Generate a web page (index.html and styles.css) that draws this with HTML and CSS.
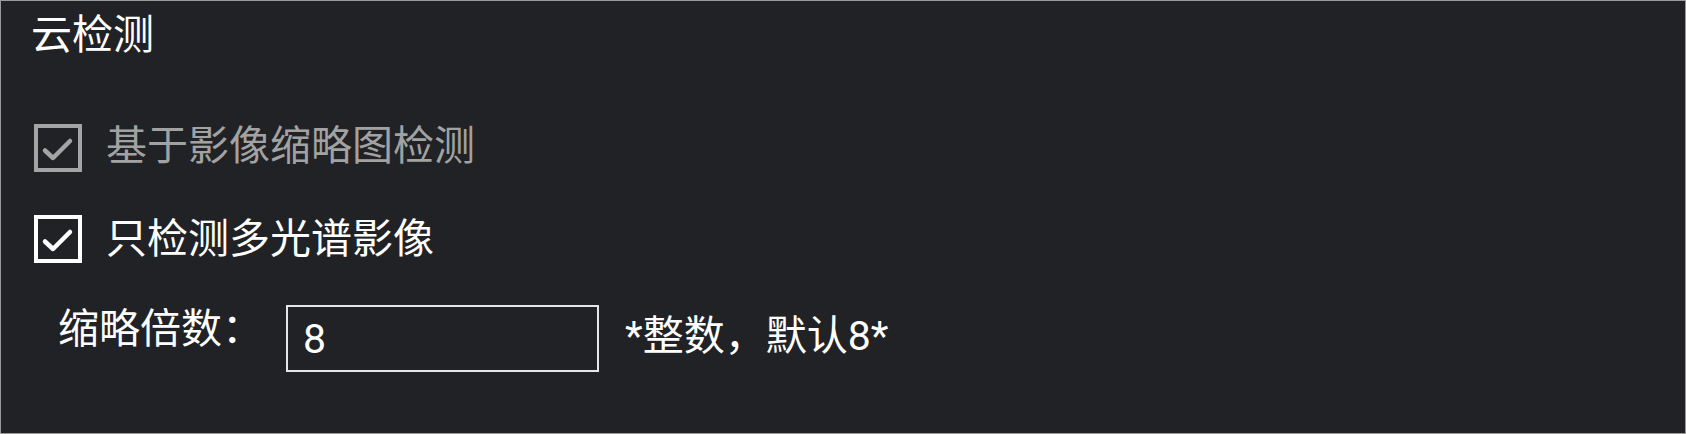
FILE: index.html
```html
<!DOCTYPE html>
<html lang="zh-CN">
<head>
<meta charset="utf-8">
<title>云检测</title>
<link rel="stylesheet" href="styles.css">
</head>
<body>
<div class="panel">
  <div class="title">云检测</div>
  <div class="check-row disabled row-first">
    <span class="box"><svg viewBox="0 0 40 40" width="40" height="40"><path d="M7 22.5 L15 30 L32 13" /></svg></span>
    <span class="label">基于影像缩略图检测</span>
  </div>
  <div class="check-row row-second">
    <span class="box"><svg viewBox="0 0 40 40" width="40" height="40"><path d="M7 22.5 L15 30 L32 13" /></svg></span>
    <span class="label">只检测多光谱影像</span>
  </div>
  <div class="field-row">
    <span class="field-label">缩略倍数：</span>
    <div class="input"><span class="input-value">8</span></div>
    <span class="hint">*整数，默认8*</span>
  </div>
</div>
</body>
</html>
```

FILE: styles.css
```css
html, body {
  margin: 0;
  padding: 0;
  background: #212226;
}

.panel {
  width: 1686px;
  height: 434px;
  box-sizing: border-box;
  border: 1px solid #9a9a9a;
  background: #212226;
  padding: 9px 0 0 30px;
  font-family: Roboto, "Noto Sans CJK SC", sans-serif;
  font-size: 41px;
  color: #ffffff;
}

.title {
  line-height: 50px;
  height: 50px;
}

.check-row {
  display: flex;
  align-items: center;
  gap: 24px;
  height: 48px;
  margin-left: 3px;
}

.row-first {
  margin-top: 64px;
}

.row-second {
  margin-top: 43px;
}

.box {
  width: 48px;
  height: 48px;
  box-sizing: border-box;
  border: 4px solid #ffffff;
  display: flex;
  align-items: center;
  justify-content: center;
  flex: none;
}

.box svg {
  display: block;
}

.box path {
  fill: none;
  stroke: #ffffff;
  stroke-width: 4.5;
  stroke-linecap: round;
  stroke-linejoin: round;
}

.label {
  line-height: 48px;
}

.disabled .box {
  border-color: #a4a4a4;
}

.disabled .box path {
  stroke: #a4a4a4;
}

.disabled .label {
  color: #a2a2a2;
  margin-bottom: 4px;
}

.field-row {
  display: flex;
  align-items: center;
  height: 67px;
  margin-top: 42px;
  margin-left: 27px;
}

.field-label {
  line-height: 48px;
  margin-bottom: 20px;
}

.input {
  width: 313px;
  height: 67px;
  box-sizing: border-box;
  border: 2px solid #e6e6e6;
  margin-left: 23px;
  padding-left: 15px;
  display: flex;
  align-items: center;
}

.input-value {
  line-height: 48px;
}

.hint {
  margin-left: 26px;
  line-height: 48px;
  margin-bottom: 6px;
}
```
